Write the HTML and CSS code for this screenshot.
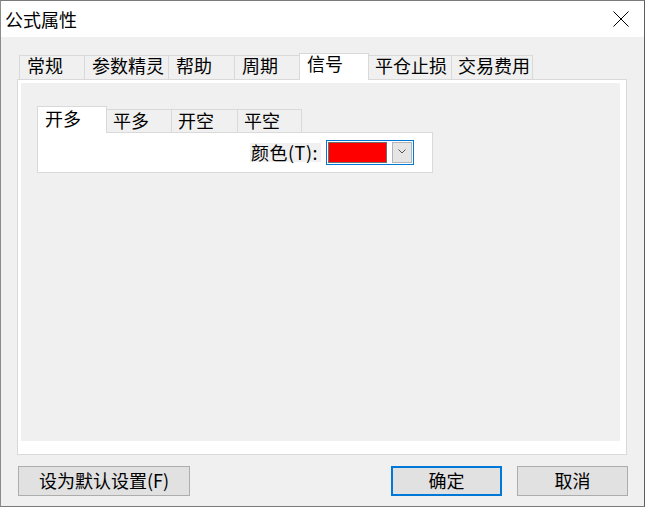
FILE: index.html
```html
<!DOCTYPE html>
<html lang="zh-CN">
<head>
<meta charset="utf-8">
<title>公式属性</title>
<link rel="stylesheet" href="styles.css">
</head>
<body>
<div class="window">
  <div class="titlebar">
    <span class="title">公式属性</span>
    <svg class="close" width="16" height="16" viewBox="0 0 16 16"><path d="M0.5 0.5 L15.5 15.5 M15.5 0.5 L0.5 15.5" stroke="#000" stroke-width="1" fill="none"/></svg>
  </div>
  <div class="body">
    <div class="tabs">
      <div class="tab w1">常规</div>
      <div class="tab w2">参数精灵</div>
      <div class="tab w3">帮助</div>
      <div class="tab w4">周期</div>
      <div class="tab w5 active">信号</div>
      <div class="tab w6">平仓止损</div>
      <div class="tab w7">交易费用</div>
    </div>
    <div class="panel">
      <div class="page">
        <div class="subtabs">
          <div class="subtab s1 active">开多</div>
          <div class="subtab s2">平多</div>
          <div class="subtab s3">开空</div>
          <div class="subtab s4">平空</div>
        </div>
        <div class="subpanel">
          <span class="label">颜色(T):</span>
          <div class="combo">
            <span class="swatch"></span>
            <span class="dd"><svg width="20" height="21" viewBox="0 0 20 21"><polyline points="6.5,7.5 10,11 13.5,7.5" fill="none" stroke="#555" stroke-width="1"/></svg></span>
          </div>
        </div>
      </div>
    </div>
    <div class="buttons">
      <div class="btn wide">设为默认设置(F)</div>
      <div class="btn primary">确定</div>
      <div class="btn cancel">取消</div>
    </div>
  </div>
</div>
</body>
</html>
```

FILE: styles.css
```css
* { box-sizing: border-box; }
html, body { margin: 0; padding: 0; background: #ffffff; }
body {
  font-family: "Noto Sans CJK SC", "Noto Sans", sans-serif;
  font-size: 18px;
  color: #000;
}
.window {
  width: 645px;
  height: 507px;
  border-top: 1px solid #7a7a7a;
  border-left: 1px solid #8c8c8c;
  border-right: 1px solid #5c5c5c;
  border-bottom: 1px solid #7a7a7a;
  background: #f0f0f0;
  display: flex;
  flex-direction: column;
}
.titlebar {
  height: 36px;
  background: #fff;
  display: flex;
  align-items: center;
  justify-content: space-between;
  padding: 0 15px 0 4px;
  flex: none;
}
.title { font-size: 18px; line-height: 36px; }
.close { display: block; }
.body {
  padding: 16px 0 0 16px;
  flex: 1;
}
.tabs {
  display: flex;
  align-items: flex-end;
  margin-left: 2px;
  height: 26px;
  position: relative;
  z-index: 1;
}
.tab {
  height: 24px;
  border: 1px solid #d9d9d9;
  border-bottom: none;
  background: #f0f0f0;
  line-height: 18px;
  padding-left: 7px;
  margin-left: -1px;
  white-space: nowrap;
}
.tab.w1 { width: 66px; margin-left: 0; }
.tab.w2 { width: 85px; }
.tab.w3 { width: 67px; }
.tab.w4 { width: 66px; }
.tab.w5 { width: 70px; }
.tab.w6 { width: 84px; padding-left: 6px; }
.tab.w7 { width: 82px; padding-left: 6px; }
.tab.active {
  height: 27px;
  margin-bottom: -1px;
  background: #fff;
  position: relative;
  z-index: 2;
}
.panel {
  width: 610px;
  height: 376px;
  border: 1px solid #d9d9d9;
  background: #fff;
  padding: 3px 6px 13px 3px;
}
.page {
  width: 100%;
  height: 100%;
  background: #f0f0f0;
  padding: 23px 0 0 16px;
}
.subtabs {
  display: flex;
  align-items: flex-end;
  height: 26px;
  position: relative;
  z-index: 1;
}
.subtab {
  height: 23px;
  border: 1px solid #d9d9d9;
  border-bottom: none;
  background: #f0f0f0;
  line-height: 20px;
  padding-left: 6px;
  margin-left: -1px;
  white-space: nowrap;
}
.subtab.s1 { width: 70px; margin-left: 0; padding-left: 7px; }
.subtab.s2 { width: 66px; }
.subtab.s3 { width: 67px; }
.subtab.s4 { width: 65px; }
.subtab.active {
  height: 27px;
  margin-bottom: -1px;
  line-height: 22px;
  background: #fff;
  position: relative;
  z-index: 2;
}
.subpanel {
  width: 396px;
  height: 41px;
  border: 1px solid #d9d9d9;
  background: #fff;
  display: flex;
  align-items: center;
  justify-content: flex-end;
  padding-right: 18px;
}
.label {
  height: 19px;
  line-height: 18px;
  background: #f0f0f0;
  padding: 0 3px 0 1px;
  margin-right: 5px;
  letter-spacing: 0.5px;
  white-space: nowrap;
}
.combo {
  width: 88px;
  height: 25px;
  border: 1px solid #0078d7;
  padding: 1px;
  display: flex;
  gap: 5px;
  background: #fff;
}
.swatch {
  width: 59px;
  height: 21px;
  background: #ff0000;
  border: 1px solid #6e6e6e;
}
.dd {
  width: 20px;
  height: 21px;
  background: #e5e5e5;
  border: 1px solid #b4b4b4;
  position: relative;
}
.dd svg { position: absolute; left: -1px; top: -1px; }
.buttons {
  display: flex;
  width: 611px;
  margin-top: 11px;
}
.btn {
  height: 30px;
  width: 111px;
  background: #e1e1e1;
  border: 1px solid #adadad;
  display: flex;
  align-items: center;
  justify-content: center;
  line-height: 20px;
  padding-bottom: 2px;
  white-space: nowrap;
}
.btn.wide { width: 172px; margin-left: 1px; }
.btn.primary { border: 2px solid #0078d7; margin-left: auto; }
.btn.cancel { margin-left: 15px; }
```
